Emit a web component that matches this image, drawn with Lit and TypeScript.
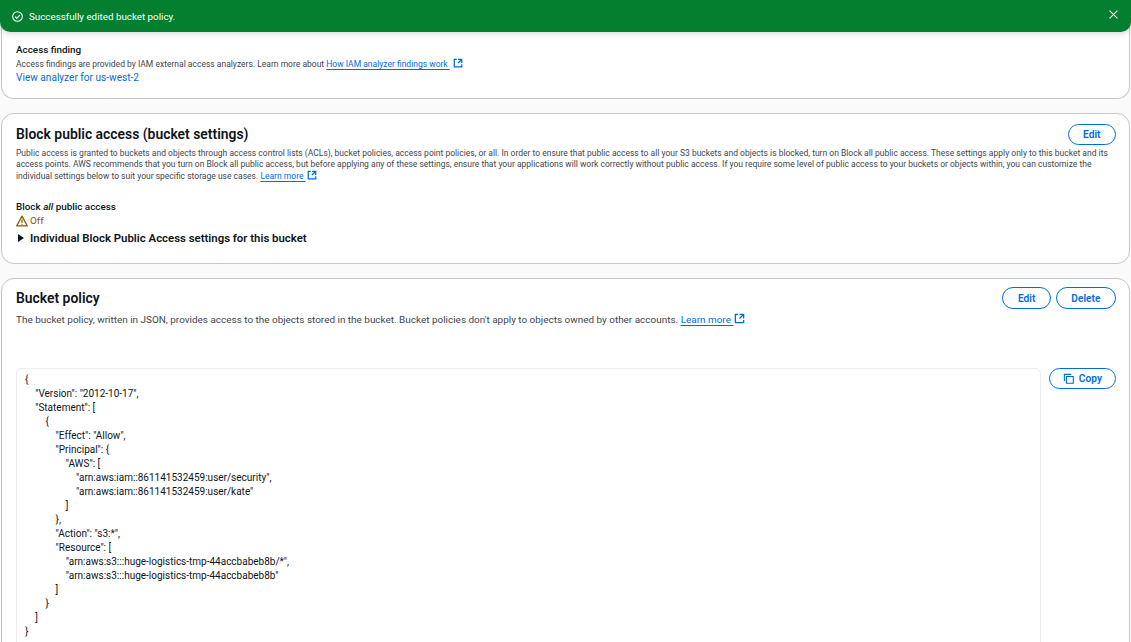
import { LitElement, html, css } from "lit";
import { customElement } from "lit/decorators.js";

const ext = html`<svg class="ext" viewBox="0 0 16 16" fill="none" stroke="currentColor" stroke-width="2"><path d="M14 8.01v-6H8M14.02 2 8 8.01M6 2.01H2v12h12v-3.99"/></svg>`;

const code = `{
\t"Version": "2012-10-17",
\t"Statement": [
\t\t{
\t\t\t"Effect": "Allow",
\t\t\t"Principal": {
\t\t\t\t"AWS": [
\t\t\t\t\t"arn:aws:iam::861141532459:user/security",
\t\t\t\t\t"arn:aws:iam::861141532459:user/kate"
\t\t\t\t]
\t\t\t},
\t\t\t"Action": "s3:*",
\t\t\t"Resource": [
\t\t\t\t"arn:aws:s3:::huge-logistics-tmp-44accbabeb8b/*",
\t\t\t\t"arn:aws:s3:::huge-logistics-tmp-44accbabeb8b"
\t\t\t]
\t\t}
\t]
}`;

@customElement("app-root")
export class AppRoot extends LitElement {
  static styles = css`
    :host { display: block; height: 642px; overflow: hidden; position: relative; background: #fafafa; font-family: Roboto, sans-serif; color: #0f141a; }
    .flash { position: absolute; left: 0; right: 0; top: 0; height: 32px; background: #037f2f; color: #fff; border-radius: 0 0 10px 10px; display: flex; align-items: center; padding: 0 12px; gap: 6px; font-size: 9.8px; box-shadow: 0 2px 6px rgba(0,7,22,.15); box-sizing: border-box; z-index: 2; }
    .flash .msg { flex: 1; }
    .flash svg { width: 11px; height: 11px; display: block; }
    .flash .close { width: 9px; height: 9px; margin: -3px 1px 0 0; }
    .page { display: flex; flex-direction: column; gap: 14px; padding: 0 1px; }
    .card { background: #fff; border: 1px solid #c6c6cd; border-radius: 13px; padding: 0 13px 0 14px; position: relative; }
    .c1 { height: 99px; box-sizing: border-box; border-top: 0; border-radius: 0 0 13px 13px; padding-top: 43px; }
    .c2 { height: 151px; box-sizing: border-box; padding-top: 10px; }
    .c3 { height: 420px; box-sizing: border-box; padding-top: 8px; }
    .label { font-size: 9.9px; font-weight: 500; line-height: 14px; }
    .desc { font-size: 8.52px; line-height: 11.2px; color: #424650; }
    .c1 .desc { line-height: 14px; }
    .c1 .ext { margin-left: 3px; }
    .desc a, .link { color: #006ce0; }
    .desc a { text-decoration: underline; text-underline-offset: 1.5px; }
    .link { font-size: 10.1px; line-height: 14px; }
    .ext { width: 10px; height: 10px; display: inline-block; vertical-align: -1px; margin-left: 1px; color: #006ce0; }
    .head { display: flex; justify-content: space-between; align-items: flex-start; }
    h2 { margin: 0; font-size: 13.9px; font-weight: 600; line-height: 22px; }
    .c2 h2 { line-height: 20px; }
    .btns { display: flex; gap: 5px; }
    .btn { height: 21px; box-sizing: border-box; border: 1.3px solid #006ce0; border-radius: 11px; padding: 0 14.5px; color: #006ce0; background: #fff; font: 600 10.2px Roboto, sans-serif; display: inline-flex; align-items: center; gap: 5px; }
    .btns .btn { height: 22px; }
    .btn svg { width: 11px; height: 11px; }
    .c2 .desc { margin-top: 3px; }
    .block { margin-top: 17px; }
    .off { display: flex; align-items: center; gap: 2px; font-size: 9.9px; line-height: 14px; color: #855900; }
    .off svg { width: 12px; height: 12px; }
    .tri { display: flex; align-items: center; gap: 5px; font-size: 11.4px; font-weight: 600; line-height: 14px; margin-top: 3.5px; }
    .tri svg { width: 8px; height: 8px; margin-left: 1px; }
    .c3 .desc { margin-top: 4px; font-size: 9.95px; }
    .c3 .desc .ext { width: 11px; height: 11px; }
    .policy { display: flex; gap: 8px; margin-top: 43px; align-items: flex-start; }
    pre { flex: 1; margin: 0; border: 1px solid #ebebf0; border-radius: 6px; padding: 4px 8px; font: 10px/14px Roboto, sans-serif; color: #0f141a; height: 400px; box-sizing: border-box; tab-size: 10.2px; white-space: pre; }
    .btn.copy { margin-top: 0; padding: 0 13px; height: 21px; flex: none; }
  `;

  render() {
    return html`
      <div class="flash">
        <svg viewBox="0 0 16 16" fill="none" stroke="#fff" stroke-width="1.6"><circle cx="8" cy="8" r="7"/><path d="M4.5 8.2 7 10.7l4.5-5"/></svg>
        <span class="msg">Successfully edited bucket policy.</span>
        <svg class="close" viewBox="0 0 16 16" fill="none" stroke="#fff" stroke-width="1.8"><path d="m1 1 14 14M15 1 1 15"/></svg>
      </div>
      <div class="page">
        <section class="card c1">
          <div class="label">Access finding</div>
          <div class="desc">Access findings are provided by IAM external access analyzers. Learn more about <a>How IAM analyzer findings work ${ext}</a></div>
          <div class="link">View analyzer for us-west-2</div>
        </section>
        <section class="card c2">
          <div class="head"><h2>Block public access (bucket settings)</h2><button class="btn">Edit</button></div>
          <div class="desc">Public access is granted to buckets and objects through access control lists (ACLs), bucket policies, access point policies, or all. In order to ensure that public access to all your S3 buckets and objects is blocked, turn on Block all public access. These settings apply only to this bucket and its access points. AWS recommends that you turn on Block all public access, but before applying any of these settings, ensure that your applications will work correctly without public access. If you require some level of public access to your buckets or objects within, you can customize the individual settings below to suit your specific storage use cases. <a>Learn more ${ext}</a></div>
          <div class="block label">Block <i>all</i> public access</div>
          <div class="off"><svg viewBox="0 0 16 16" fill="none" stroke="#855900" stroke-width="1.6" stroke-linejoin="round"><path d="M8 1.5 15 14.5H1z"/><path d="M8 6v4.5M8 11.5v1.5"/></svg>Off</div>
          <div class="tri"><svg viewBox="0 0 8 8"><path d="M1 0l6 4-6 4z" fill="#0f141a"/></svg>Individual Block Public Access settings for this bucket</div>
        </section>
        <section class="card c3">
          <div class="head"><h2>Bucket policy</h2><div class="btns"><button class="btn">Edit</button><button class="btn">Delete</button></div></div>
          <div class="desc">The bucket policy, written in JSON, provides access to the objects stored in the bucket. Bucket policies don't apply to objects owned by other accounts. <a>Learn more ${ext}</a></div>
          <div class="policy">
            <pre>${code}</pre>
            <button class="btn copy"><svg viewBox="0 0 16 16" fill="none" stroke="#006ce0" stroke-width="1.6"><path d="M5 5h10v10H5z"/><path d="M2 12V2h10"/></svg>Copy</button>
          </div>
        </section>
      </div>
    `;
  }
}
